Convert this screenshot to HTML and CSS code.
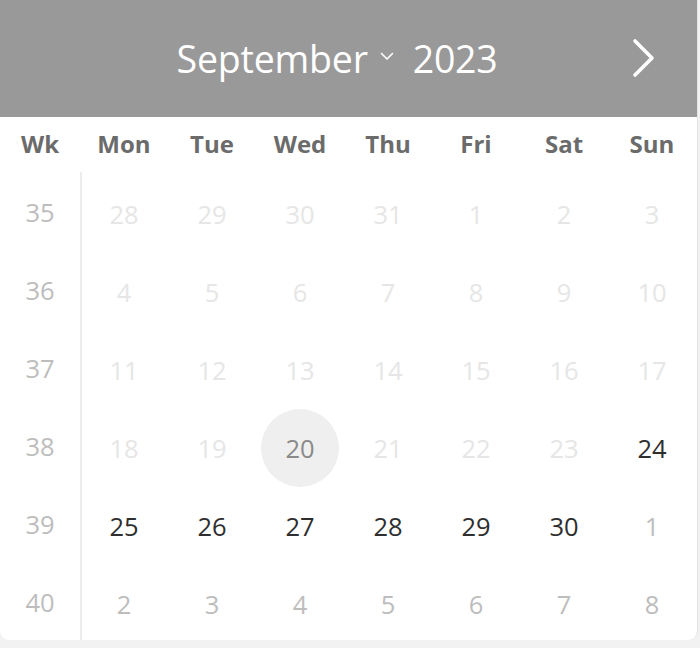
FILE: index.html
```html
<!DOCTYPE html>
<html>
<head>
<meta charset="utf-8">
<link rel="stylesheet" href="styles.css">
</head>
<body>
<div class="card">
  <div class="head">
    <div class="title">
      <span class="month">September</span>
      <svg class="caret" width="14" height="9" viewBox="0 0 14 9"><path d="M1.5 1.5 L7 7 L12.5 1.5" fill="none" stroke="#fff" stroke-width="1.6" stroke-linecap="round" stroke-linejoin="round"/></svg>
      <span class="year">2023</span>
    </div>
    <svg class="arrow" width="26" height="40" viewBox="0 0 26 40"><path d="M4 3 L21 20 L4 37" fill="none" stroke="#fff" stroke-width="3.6" stroke-linecap="round" stroke-linejoin="round"/></svg>
  </div>
  <div class="grid dows">
    <div>Wk</div><div>Mon</div><div>Tue</div><div>Wed</div><div>Thu</div><div>Fri</div><div>Sat</div><div>Sun</div>
  </div>
  <div class="body">
    <div class="grid row"><div class="wk">35</div><div class="d off">28</div><div class="d off">29</div><div class="d off">30</div><div class="d off">31</div><div class="d off">1</div><div class="d off">2</div><div class="d off">3</div></div>
    <div class="grid row"><div class="wk">36</div><div class="d off">4</div><div class="d off">5</div><div class="d off">6</div><div class="d off">7</div><div class="d off">8</div><div class="d off">9</div><div class="d off">10</div></div>
    <div class="grid row"><div class="wk">37</div><div class="d off">11</div><div class="d off">12</div><div class="d off">13</div><div class="d off">14</div><div class="d off">15</div><div class="d off">16</div><div class="d off">17</div></div>
    <div class="grid row"><div class="wk">38</div><div class="d off">18</div><div class="d off">19</div><div class="d today"><span>20</span></div><div class="d off">21</div><div class="d off">22</div><div class="d off">23</div><div class="d on">24</div></div>
    <div class="grid row"><div class="wk">39</div><div class="d on">25</div><div class="d on">26</div><div class="d on">27</div><div class="d on">28</div><div class="d on">29</div><div class="d on">30</div><div class="d nm">1</div></div>
    <div class="grid row"><div class="wk">40</div><div class="d nm">2</div><div class="d nm">3</div><div class="d nm">4</div><div class="d nm">5</div><div class="d nm">6</div><div class="d nm">7</div><div class="d nm">8</div></div>
  </div>
</div>
</body>
</html>
```
FILE: styles.css
```css
html, body {
  margin: 0;
  padding: 0;
  background: #f2f2f2;
  font-family: "Open Sans", "Noto Sans", sans-serif;
}
.card {
  width: 697px;
  height: 640px;
  background: #fff;
  border-right: 1px solid #e4e4e4;
  border-radius: 0 0 9px 9px;
  overflow: hidden;
}
.head {
  height: 117px;
  background: #999999;
  display: flex;
  align-items: center;
  justify-content: center;
  position: relative;
}
.title {
  display: flex;
  align-items: center;
  color: #fff;
  font-size: 37.5px;
  margin-left: -23px;
}
.month { letter-spacing: -0.2px; }
.caret { margin: 0 19px 0 12px; position: relative; top: -2px; }
.year { letter-spacing: -0.3px; }
.arrow {
  position: absolute;
  right: 40px;
  top: 38px;
}
.grid {
  display: grid;
  grid-template-columns: 80px repeat(7, 88px);
}
.dows {
  height: 53px;
  padding-bottom: 5px;
  align-items: center;
  text-align: center;
  font-weight: 700;
  font-size: 24px;
  color: #6b6b6b;
}
.body {
  position: relative;
}
.body::before {
  content: "";
  position: absolute;
  left: 80px;
  top: -3px;
  bottom: -10px;
  width: 2px;
  background: #ececec;
}
.row {
  height: 78px;
  align-items: center;
  text-align: center;
  font-size: 25.5px;
}
.wk { color: #bdbdbd; margin-top: -4px; }
.d { display: flex; align-items: center; justify-content: center; height: 78px; }
.off { color: #e6e6e6; }
.on { color: #2e2e2e; }
.nm { color: #bdbdbd; }
.today span {
  width: 78px;
  height: 78px;
  border-radius: 50%;
  background: #efefef;
  color: #8a8a8a;
  display: flex;
  align-items: center;
  justify-content: center;
}
```
